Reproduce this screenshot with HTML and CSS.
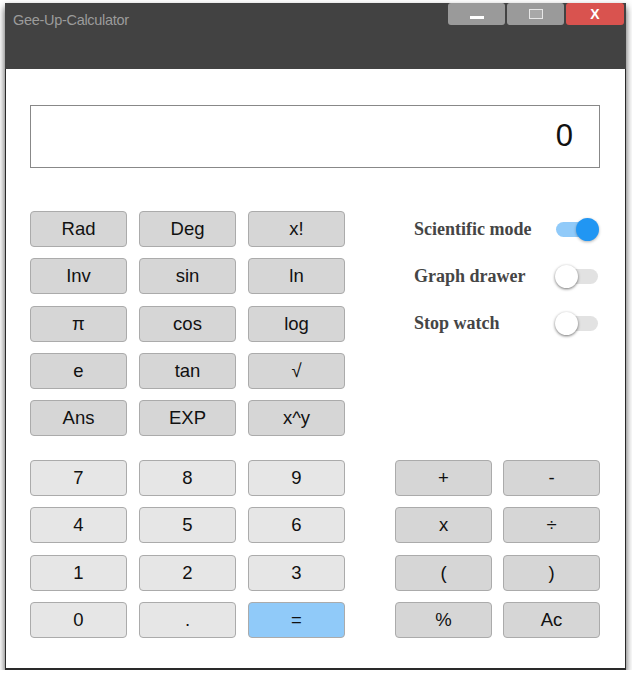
FILE: index.html
```html
<!DOCTYPE html>
<html>
<head>
<meta charset="utf-8">
<link rel="stylesheet" href="styles.css">
</head>
<body>
<div class="window">
  <div class="titlebar">
    <span class="title">Gee-Up-Calculator</span>
    <div class="controls">
      <div class="ctl min"><span class="min-bar"></span></div>
      <div class="ctl max"><span class="max-box"></span></div>
      <div class="ctl close">X</div>
    </div>
  </div>
  <div class="content">
    <div class="display">0</div>
    <div class="section top">
      <div class="grid">
        <button class="btn fn">Rad</button>
        <button class="btn fn">Deg</button>
        <button class="btn fn">x!</button>
        <button class="btn fn">Inv</button>
        <button class="btn fn">sin</button>
        <button class="btn fn">ln</button>
        <button class="btn fn">π</button>
        <button class="btn fn">cos</button>
        <button class="btn fn">log</button>
        <button class="btn fn">e</button>
        <button class="btn fn">tan</button>
        <button class="btn fn">√</button>
        <button class="btn fn">Ans</button>
        <button class="btn fn">EXP</button>
        <button class="btn fn">x^y</button>
      </div>
      <div class="toggles">
        <div class="toggle-row"><span class="label">Scientific mode</span><span class="switch on"><span class="thumb"></span></span></div>
        <div class="toggle-row"><span class="label">Graph drawer</span><span class="switch"><span class="thumb"></span></span></div>
        <div class="toggle-row"><span class="label">Stop watch</span><span class="switch"><span class="thumb"></span></span></div>
      </div>
    </div>
    <div class="section bottom">
      <div class="grid">
        <button class="btn num">7</button>
        <button class="btn num">8</button>
        <button class="btn num">9</button>
        <button class="btn num">4</button>
        <button class="btn num">5</button>
        <button class="btn num">6</button>
        <button class="btn num">1</button>
        <button class="btn num">2</button>
        <button class="btn num">3</button>
        <button class="btn num">0</button>
        <button class="btn num">.</button>
        <button class="btn eq">=</button>
      </div>
      <div class="grid ops">
        <button class="btn fn">+</button>
        <button class="btn fn">-</button>
        <button class="btn fn">x</button>
        <button class="btn fn">÷</button>
        <button class="btn fn">(</button>
        <button class="btn fn">)</button>
        <button class="btn fn">%</button>
        <button class="btn fn">Ac</button>
      </div>
    </div>
  </div>
</div>
</body>
</html>
```

FILE: styles.css
```css
html, body {
  margin: 0;
  padding: 0;
  background: #ffffff;
}
body {
  padding: 3px 0 0 5px;
  font-family: "Liberation Sans", Arial, sans-serif;
}
.window {
  width: 621px;
  background: #424242;
  box-shadow: 0 4px 7px rgba(0, 0, 0, 0.7);
}
.titlebar {
  height: 66px;
  display: flex;
  justify-content: space-between;
  align-items: flex-start;
}
.title {
  color: #9b9b9b;
  font-size: 14.5px;
  letter-spacing: -0.3px;
  margin: 9px 0 0 8px;
}
.controls {
  display: flex;
  gap: 2px;
  margin-right: 2px;
}
.ctl {
  width: 57px;
  height: 22px;
  border-radius: 3px;
  background: #9a9a9a;
  display: flex;
  align-items: center;
  justify-content: center;
}
.close {
  width: 58px;
}
.min-bar {
  width: 14px;
  height: 3px;
  background: #ffffff;
  margin-top: 7px;
}
.max-box {
  width: 12px;
  height: 8px;
  border: 1px solid #e6e6e6;
  background: #a8a8a8;
}
.close {
  background: #d9534f;
  color: #ffffff;
  font-size: 14px;
  font-weight: bold;
}
.content {
  background: #ffffff;
  height: 601px;
  border-left: 1px solid #2a2a2a;
  border-right: 1px solid #2a2a2a;
  border-bottom: 2px solid #2a2a2a;
  padding: 36px 25px 0 24px;
  box-sizing: border-box;
}
.display {
  height: 63px;
  border: 1px solid #888888;
  box-sizing: border-box;
  text-align: right;
  font-size: 31px;
  line-height: 59px;
  padding-right: 26px;
  color: #111111;
}
.section {
  display: flex;
  justify-content: space-between;
}
.top {
  margin-top: 43px;
}
.bottom {
  margin-top: 24px;
}
.grid {
  display: grid;
  grid-template-columns: 97px 97px 97px;
  grid-auto-rows: 36px;
  column-gap: 12px;
  row-gap: 11.3px;
}
.ops {
  grid-template-columns: 97px 97px;
  column-gap: 11px;
}
.btn {
  font-family: "Liberation Sans", Arial, sans-serif;
  font-size: 18.5px;
  color: #111111;
  border: 1px solid #ababab;
  border-radius: 4px;
  padding: 0;
  margin: 0;
}
.fn { background: #d6d6d6; }
.num { background: #e6e6e6; }
.eq { background: #90caf9; }
.toggles {
  width: 184px;
  margin-right: 2px;
  display: flex;
  flex-direction: column;
  gap: 25px;
  margin-top: 7px;
}
.toggle-row {
  height: 22px;
  display: flex;
  align-items: center;
  justify-content: space-between;
}
.label {
  font-family: "Liberation Serif", "Times New Roman", serif;
  font-weight: bold;
  font-size: 18px;
  color: #454545;
}
.switch {
  position: relative;
  width: 42px;
  height: 15px;
  border-radius: 8px;
  background: #e2e2e2;
}
.switch .thumb {
  position: absolute;
  top: -4px;
  left: -1px;
  width: 23px;
  height: 23px;
  border-radius: 50%;
  background: #ffffff;
  box-shadow: 0 1px 3px rgba(0, 0, 0, 0.55);
}
.switch.on {
  background: #90caf9;
}
.switch.on .thumb {
  left: auto;
  right: -1px;
  background: #2196f3;
  box-shadow: 0 1px 3px rgba(0, 0, 0, 0.3);
}
```
